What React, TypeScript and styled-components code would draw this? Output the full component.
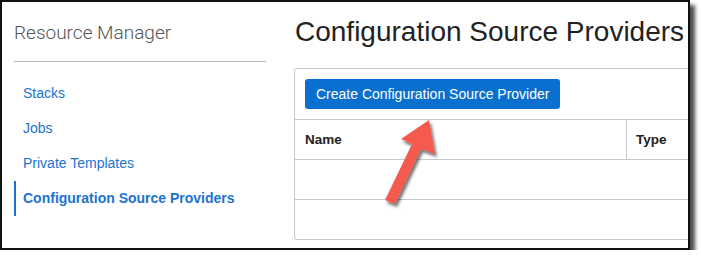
import React from 'react';
import styled, { createGlobalStyle } from 'styled-components';

const GlobalStyle = createGlobalStyle`
  html, body {
    margin: 0;
    padding: 0;
    background: #ffffff;
  }
  body {
    font-family: 'Liberation Sans', Arial, sans-serif;
  }
`;

const Frame = styled.div`
  position: relative;
  width: 686px;
  height: 246px;
  border: 2px solid #111;
  background: #fff;
  box-shadow: 5px 5px 4px rgba(0, 0, 0, 0.7);
  display: flex;
  overflow: hidden;
`;

const Sidebar = styled.nav`
  flex: 0 0 252px;
  padding: 21px 0 0 12px;
  margin-right: 28px;
`;

const SidebarTitle = styled.h2`
  margin: 0;
  font-family: Roboto, 'Liberation Sans', sans-serif;
  font-weight: 300;
  font-size: 19px;
  line-height: 20px;
  color: #555;
  padding-bottom: 18px;
  border-bottom: 1px solid #b9bcc6;
`;

const NavList = styled.ul`
  list-style: none;
  margin: 14px 0 0;
  padding: 0;
`;

const NavItem = styled.li<{ active?: boolean }>`
  height: 35px;
  line-height: 35px;
  padding-left: 7px;
  border-left: 2px solid ${p => (p.active ? '#1a73d0' : 'transparent')};
  font-size: 14px;
  font-weight: ${p => (p.active ? 'bold' : 'normal')};
  color: #1b73d1;
  white-space: nowrap;
`;

const Main = styled.main`
  flex: 1;
  padding-top: 14px;
  min-width: 0;
`;

const PageTitle = styled.h1`
  margin: 0 0 20px 1px;
  font-weight: normal;
  font-size: 28px;
  line-height: 32px;
  color: #222;
  white-space: nowrap;
`;

const Panel = styled.section`
  width: 440px;
  border: 1px solid #c4c9d0;
  border-radius: 3px;
`;

const Toolbar = styled.div`
  padding: 10px;
`;

const PrimaryButton = styled.button`
  height: 30px;
  padding: 0 11px;
  border: none;
  border-radius: 3px;
  background: #0a70cf;
  color: #fff;
  font-family: 'Liberation Sans', Arial, sans-serif;
  font-size: 14px;
`;

const Table = styled.div`
  display: grid;
  grid-template-columns: 332px 1fr;
`;

const HeaderCell = styled.div<{ last?: boolean }>`
  height: 39px;
  line-height: 39px;
  padding-left: ${p => (p.last ? '9px' : '10px')};
  border-top: 1px solid #c4c9d0;
  border-bottom: 1px solid #c4c9d0;
  border-right: ${p => (p.last ? 'none' : '1px solid #c4c9d0')};
  font-weight: bold;
  font-size: 13.5px;
  color: #222;
`;

const EmptyRow = styled.div<{ last?: boolean }>`
  grid-column: 1 / -1;
  height: 39px;
  border-bottom: ${p => (p.last ? 'none' : '1px solid #c4c9d0')};
`;

const Arrow = styled.svg`
  position: absolute;
  left: 370px;
  top: 105px;
  overflow: visible;
`;

const navItems = ['Stacks', 'Jobs', 'Private Templates', 'Configuration Source Providers'];

export default function App() {
  return (
    <>
      <GlobalStyle />
      <Frame>
        <Sidebar>
          <SidebarTitle>Resource Manager</SidebarTitle>
          <NavList>
            {navItems.map((item, i) => (
              <NavItem key={item} active={i === navItems.length - 1}>
                {item}
              </NavItem>
            ))}
          </NavList>
        </Sidebar>
        <Main>
          <PageTitle>Configuration Source Providers</PageTitle>
          <Panel>
            <Toolbar>
              <PrimaryButton>Create Configuration Source Provider</PrimaryButton>
            </Toolbar>
            <Table>
              <HeaderCell>Name</HeaderCell>
              <HeaderCell last>Type</HeaderCell>
              <EmptyRow />
              <EmptyRow last />
            </Table>
          </Panel>
        </Main>
        <Arrow width="80" height="110" viewBox="370 105 80 110">
          <defs>
            <filter id="arrowShadow" x="-30%" y="-30%" width="160%" height="160%">
              <feDropShadow dx="2" dy="3" stdDeviation="1.8" floodColor="#000" floodOpacity="0.55" />
            </filter>
          </defs>
          <polygon
            points="427,118 433,152 419,147 393,202 383,198 410,142 399,137"
            fill="#f45a4d"
            filter="url(#arrowShadow)"
          />
        </Arrow>
      </Frame>
    </>
  );
}
